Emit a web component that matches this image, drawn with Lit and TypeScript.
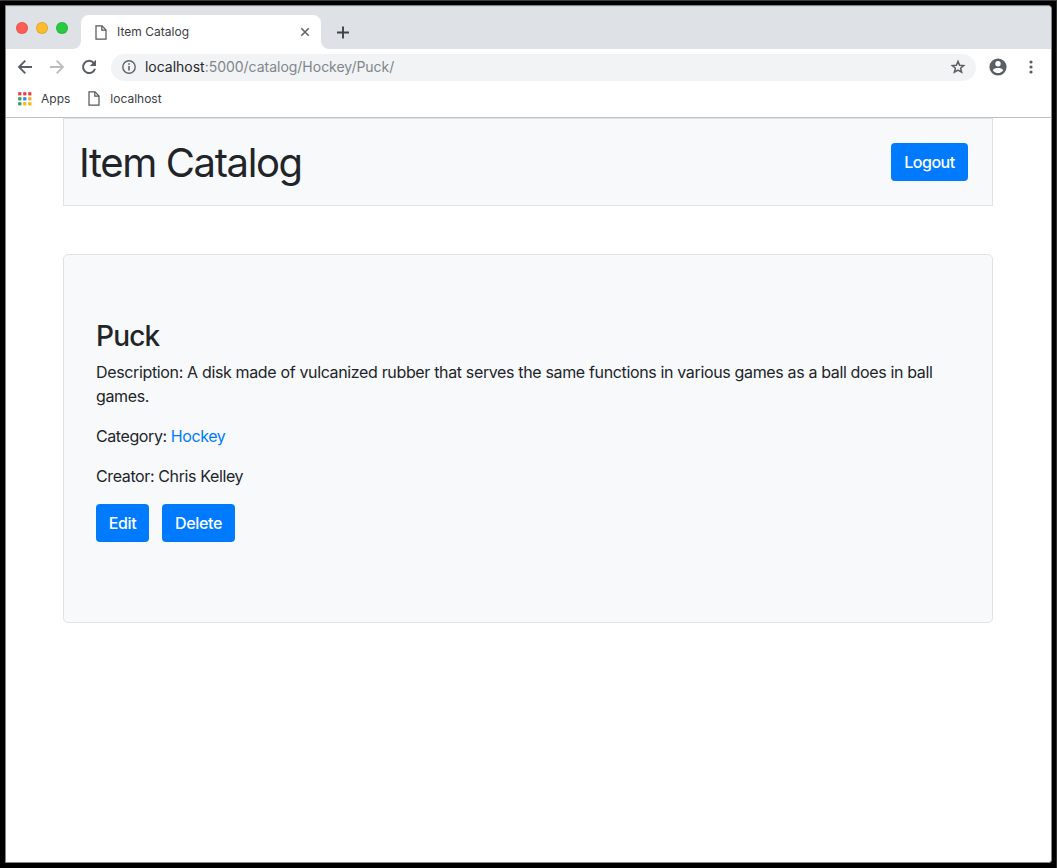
import { LitElement, html, css, svg } from "lit";
import { customElement } from "lit/decorators.js";

const pageIcon = html`<svg class="page-icon" width="12" height="15" viewBox="0 0 12 15" fill="none" stroke="#56595c" stroke-width="1.25">
  <path d="M1 .9H7L11 5V14.1H1Z" /><path d="M6.8 1V5.2H11" />
</svg>`;

const appColors = ["#ea3c38", "#ea3c38", "#ea3c38", "#2f9c5a", "#2b83ea", "#f5a91b", "#2f9c5a", "#f9b513", "#f9b513"];

@customElement("browser-chrome")
class BrowserChrome extends LitElement {
  static styles = css`
    :host { display: block; font-family: Inter, "Liberation Sans", sans-serif; color: #3c4043; }
    svg { display: block; flex: none; }
    .strip { height: 43px; box-sizing: border-box; background: #dee1e6; display: flex; align-items: flex-end; padding-left: 10px; border-top: 1px solid #d3d5d9; border-radius: 0 3px 0 0; }
    .lights { display: flex; gap: 8px; width: 57px; padding-bottom: 15px; }
    .light { width: 12px; height: 12px; border-radius: 50%; box-sizing: border-box; border: 1px solid #0000001a; }
    .red { background: #ff5c54; } .yellow { background: #fdbc2e; } .green { background: #27ca40; }
    .flare { width: 8px; height: 8px; }
    .left { background: radial-gradient(circle at 0 0, #0000 7.5px, #fff 8.2px); }
    .right { background: radial-gradient(circle at 100% 0, #0000 7.5px, #fff 8.2px); }
    .tab { width: 240px; height: 34px; background: #fff; border-radius: 8px 8px 0 0; display: flex; align-items: center; box-sizing: border-box; padding: 0 11px 0 14px; }
    .title { flex: 1; margin-left: 10px; font-size: 12px; line-height: 16px; letter-spacing: 0.02px; }
    .plus { margin: 0 0 10px 8px; }
    .toolbar { height: 37px; box-sizing: border-box; display: flex; align-items: center; background: #fff; padding: 0 16px 1px 11px; }
    .nav { margin-right: 16px; }
    .reload { margin-right: 14px; }
    .omnibox { width: 865px; height: 27px; border-radius: 14px; background: #f1f3f4; display: flex; align-items: center; box-sizing: border-box; padding: 0 10px 1px 11px; }
    .url { flex: 1; margin-left: 9px; font-size: 14px; line-height: 20px; letter-spacing: -0.02px; color: #80868b; }
    .host { color: #27292c; }
    .person { margin-left: 13px; }
    .dots { margin-left: 22px; }
    .bookmarks { height: 32px; box-sizing: border-box; display: flex; align-items: center; background: #fff; padding: 0 0 6px 12px; font-size: 12px; line-height: 16px; border-bottom: 1px solid #bfc1c4; }
    .bookmark-page { margin: 0 10px 0 18px; }
    .apps { margin-right: 9px; }
  `;
  render() {
    return html`
      <div class="strip">
        <div class="lights"><span class="light red"></span><span class="light yellow"></span><span class="light green"></span></div>
        <span class="flare left"></span>
        <div class="tab">${pageIcon}<span class="title">Item Catalog</span>
          <svg width="10" height="10" viewBox="0 0 10 10" stroke="#5f6368" stroke-width="1.6"><path d="M1.3 1.3L8.7 8.7M8.7 1.3L1.3 8.7" /></svg>
        </div>
        <span class="flare right"></span>
        <svg class="plus" width="12" height="13" viewBox="0 0 12 13" stroke="#3f4246" stroke-width="1.9"><path d="M0 6.5H12M6 .5V12.5" /></svg>
      </div>
      <div class="toolbar">
        <svg class="nav" width="16" height="16" viewBox="0 0 16 16" fill="none" stroke="#5a5e63" stroke-width="1.9"><path d="M15 8H2.3M8.3 1.6L2 8L8.3 14.4" /></svg>
        <svg class="nav" width="16" height="16" viewBox="0 0 16 16" fill="none" stroke="#bcbec1" stroke-width="1.9"><path d="M1 8H13.7M7.7 1.6L14 8L7.7 14.4" /></svg>
        <svg class="reload" width="16" height="16" viewBox="0 0 16 16"><path d="M12.8 4A6.1 6.1 0 1 0 14 9.7" fill="none" stroke="#5a5e63" stroke-width="2" /><path d="M15 .8V7H8.8Z" fill="#5a5e63" /></svg>
        <div class="omnibox">
          <svg width="14" height="14" viewBox="0 0 14 14"><circle cx="7" cy="7" r="6.2" fill="none" stroke="#5f6368" stroke-width="1.4" /><path d="M7 6V10.5M7 3.3V4.8" stroke="#5f6368" stroke-width="1.6" /></svg>
          <span class="url"><span class="host">localhost</span>:5000/catalog/Hockey/Puck/</span>
          <svg width="16" height="16" viewBox="0 0 16 16" fill="none" stroke="#5a5e63" stroke-width="1.5"><path d="M8 2.4L9.6 6.2L13.7 6.5L10.6 9.2L11.6 13.2L8 11.1L4.4 13.2L5.4 9.2L2.3 6.5L6.4 6.2Z" /></svg>
        </div>
        <svg class="person" width="18" height="18" viewBox="0 0 18 18"><circle cx="9" cy="9" r="8.6" fill="#5a5f65" /><circle cx="9" cy="5.8" r="2.7" fill="#fff" /><path d="M3.8 12.2C4.1 10.4 6.8 9.9 9 9.9S13.9 10.4 14.2 12.2C13 14.1 11.1 15 9 15S5 14.1 3.8 12.2Z" fill="#fff" /></svg>
        <svg class="dots" width="4" height="14" viewBox="0 0 4 14" fill="#5a5e63"><circle cx="2" cy="2" r="1.6" /><circle cx="2" cy="7" r="1.6" /><circle cx="2" cy="12" r="1.6" /></svg>
      </div>
      <div class="bookmarks">
        <svg class="apps" width="14" height="14" viewBox="0 0 14 14">${appColors.map((c, i) => svg`<rect x=${(i % 3) * 5 + 0.2} y=${Math.floor(i / 3) * 5 + 0.2} width="3.2" height="3.2" fill=${c} />`)}</svg>
        <span class="apps-label">Apps</span><span class="bookmark-page">${pageIcon}</span><span class="bookmark-label">localhost</span>
      </div>`;
  }
}

@customElement("catalog-page")
class CatalogPage extends LitElement {
  static styles = css`
    :host { display: block; padding: 0 58px 0 57px; font-family: Inter, "Liberation Sans", sans-serif; font-size: 16px; line-height: 24px; color: #212529; }
    .masthead { box-sizing: border-box; height: 88px; border: 1px solid #dfe3e7; background: #f8f9fb; display: flex; justify-content: space-between; align-items: center; padding: 0 24px 0 15px; }
    h1 { margin: 2px 0 0; font-size: 40px; line-height: 48px; font-weight: 400; letter-spacing: -1.38px; }
    .card { box-sizing: border-box; height: 369px; margin-top: 48px; border: 1px solid #dfe3e7; border-radius: 5px; background: #f8f9fb; padding: 64px 32px; }
    h3 { margin: 0 0 7px; font-size: 28px; line-height: 34px; font-weight: 500; letter-spacing: -0.8px; }
    p { margin: 0 0 16px; }
    .description { letter-spacing: -0.352px; }
    .category { letter-spacing: -0.41px; }
    .creator { letter-spacing: -0.38px; }
    .link { color: #007bff; text-decoration: none; }
    .actions { display: flex; gap: 13px; }
    .btn { box-sizing: border-box; height: 38px; padding: 0; border: 0; border-radius: 4px; background: #007bff; color: #fff; font: 500 16px/24px Inter, "Liberation Sans", sans-serif; letter-spacing: -0.35px; }
    .logout { width: 77px; letter-spacing: -0.5px; } .edit { width: 53px; } .delete { width: 73px; }
  `;
  render() {
    return html`
      <header class="masthead"><h1>Item Catalog</h1><button class="btn logout">Logout</button></header>
      <section class="card">
        <h3>Puck</h3>
        <p class="description">Description: A disk made of vulcanized rubber that serves the same functions in various games as a ball does in ball games.</p>
        <p class="category">Category: <a class="link">Hockey</a></p>
        <p class="creator">Creator: Chris Kelley</p>
        <div class="actions"><button class="btn edit">Edit</button><button class="btn delete">Delete</button></div>
      </section>`;
  }
}

@customElement("app-root")
class AppRoot extends LitElement {
  static styles = css`
    :host { display: block; box-sizing: border-box; width: 1057px; height: 868px; overflow: hidden; background: #000; border-top: 1px solid #3c3c3c; border-right: 1px solid #303030; padding: 4px 4px 5px 5px; }
    .window { box-sizing: border-box; height: 858px; background: #fff; border: 1px solid #858585; border-radius: 0 4px 3px 0; }
  `;
  render() {
    return html`<main class="window"><browser-chrome></browser-chrome><catalog-page></catalog-page></main>`;
  }
}
